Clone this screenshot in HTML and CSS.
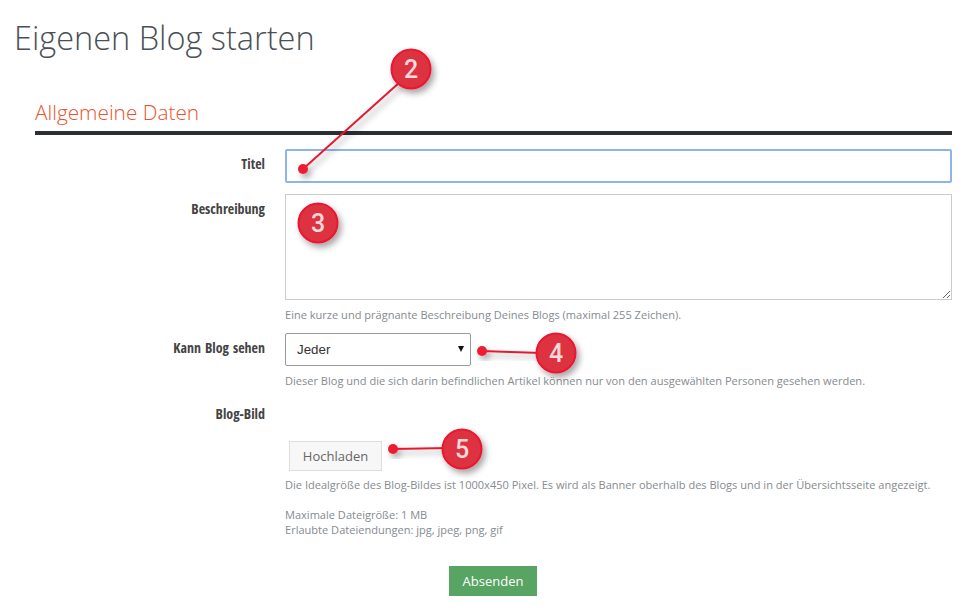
FILE: index.html
```html
<!DOCTYPE html>
<html lang="de">
<head>
    <meta charset="UTF-8">
    <meta name="viewport" content="width=device-width, initial-scale=1.0">
    <title>Eigenen Blog starten</title>
    <link rel="stylesheet" href="styles.css">
</head>
<body>
    <h1 class="page-title">Eigenen Blog starten</h1>

    <form class="blog-form">
        <h2 class="section-title">Allgemeine Daten</h2>

        <div class="form-row row-title">
            <label class="form-label">Titel</label>
            <div class="form-field">
                <input type="text" class="text-input">
            </div>
        </div>

        <div class="form-row row-description">
            <label class="form-label">Beschreibung</label>
            <div class="form-field">
                <textarea class="text-area"></textarea>
                <p class="help-text">Eine kurze und prägnante Beschreibung Deines Blogs (maximal 255 Zeichen).</p>
            </div>
        </div>

        <div class="form-row row-visibility">
            <label class="form-label">Kann Blog sehen</label>
            <div class="form-field">
                <div class="select-wrap">
                    <select class="select-input">
                        <option>Jeder</option>
                    </select>
                </div>
                <p class="help-text">Dieser Blog und die sich darin befindlichen Artikel können nur von den ausgewählten Personen gesehen werden.</p>
            </div>
        </div>

        <div class="form-row row-image">
            <label class="form-label">Blog-Bild</label>
            <div class="form-field">
                <button type="button" class="upload-btn">Hochladen</button>
                <p class="help-text">Die Idealgröße des Blog-Bildes ist 1000x450 Pixel. Es wird als Banner oberhalb des Blogs und in der Übersichtsseite angezeigt.</p>
                <p class="help-text help-limits">Maximale Dateigröße: 1 MB<br>Erlaubte Dateiendungen: jpg, jpeg, png, gif</p>
            </div>
        </div>

        <div class="form-actions">
            <button type="button" class="submit-btn">Absenden</button>
        </div>
    </form>

    <!-- numbered callouts lying over the form -->
    <svg class="callouts" width="971" height="608" viewBox="0 0 971 608">
        <defs>
            <filter id="soft-shadow" x="-50%" y="-50%" width="200%" height="200%">
                <feDropShadow dx="3" dy="4" stdDeviation="3" flood-color="#000" flood-opacity="0.35"/>
            </filter>
        </defs>
        <g filter="url(#soft-shadow)">
            <line class="callout-line" x1="303" y1="169" x2="400" y2="82"/>
            <circle class="callout-dot" cx="303" cy="169" r="5"/>
        </g>
        <g filter="url(#soft-shadow)">
            <line class="callout-line" x1="482" y1="351" x2="542" y2="353"/>
            <circle class="callout-dot" cx="482" cy="351" r="5"/>
        </g>
        <g filter="url(#soft-shadow)">
            <line class="callout-line" x1="393" y1="449" x2="448" y2="448"/>
            <circle class="callout-dot" cx="393" cy="449" r="5"/>
        </g>
        <g filter="url(#soft-shadow)"><circle class="callout-badge" cx="411" cy="69" r="19.5"/></g>
        <text class="callout-num" x="411" y="78">2</text>
        <g filter="url(#soft-shadow)"><circle class="callout-badge" cx="318" cy="223" r="19.5"/></g>
        <text class="callout-num" x="318" y="232">3</text>
        <g filter="url(#soft-shadow)"><circle class="callout-badge" cx="556" cy="353" r="19.5"/></g>
        <text class="callout-num" x="556" y="362">4</text>
        <g filter="url(#soft-shadow)"><circle class="callout-badge" cx="462" cy="449" r="19.5"/></g>
        <text class="callout-num" x="462" y="458">5</text>
    </svg>
</body>
</html>
```
FILE: styles.css
```css
body {
    margin: 0;
    height: 608px;
    overflow: hidden;
    background: #fff;
    font-family: "Open Sans", sans-serif;
    color: #555;
    position: relative;
}

.page-title {
    margin: 0;
    padding: 15px 0 0 14px;
    font-size: 32.5px;
    line-height: 46px;
    font-weight: 300;
    color: #4a5056;
}

.blog-form {
    margin: 0 19px 0 35px;
    padding-top: 37px;
}

.section-title {
    margin: 0;
    padding-bottom: 5px;
    border-bottom: 4px solid #2b2e33;
    font-size: 20.8px;
    line-height: 28px;
    font-weight: 300;
    color: #e9522c;
}

.form-row {
    display: grid;
    grid-template-columns: 230px 1fr;
    column-gap: 20px;
}

.row-title {
    margin-top: 14px;
}

.row-description {
    margin-top: 11px;
}

.row-visibility {
    margin-top: 11px;
}

.row-image {
    margin-top: 16px;
}

.form-label {
    text-align: right;
    font-size: 14px;
    line-height: 20px;
    font-weight: 700;
    font-stretch: 75%;
    word-spacing: 1.5px;
    color: #444;
}

.row-title .form-label {
    padding-top: 5px;
}

.row-description .form-label {
    padding-top: 5px;
}

.row-visibility .form-label {
    padding-top: 5px;
}

.text-input {
    display: block;
    box-sizing: border-box;
    width: 100%;
    height: 34px;
    border: 2px solid #8fb4ec;
    border-radius: 2px;
    outline: none;
}

.text-area {
    display: block;
    box-sizing: border-box;
    width: 100%;
    height: 106px;
    border: 1px solid #ccc;
    border-radius: 0;
    outline: none;
}

.select-wrap {
    position: relative;
    width: 186px;
}

.select-wrap::after {
    content: "";
    position: absolute;
    left: 173px;
    top: 13px;
    border-left: 3px solid transparent;
    border-right: 3px solid transparent;
    border-top: 6px solid #111;
}

.select-input {
    display: block;
    box-sizing: border-box;
    width: 186px;
    height: 33px;
    padding-left: 11px;
    border: 1px solid #999;
    border-radius: 2px;
    background: #fff;
    appearance: none;
    font-family: "Liberation Sans", sans-serif;
    font-size: 13.33px;
    color: #333;
}

.help-text {
    margin: 0;
    font-size: 11.05px;
    line-height: 15px;
    color: #868b90;
}

.row-description .help-text {
    margin-top: 7px;
}

.row-visibility .help-text {
    margin-top: 7px;
}

.row-image .help-text {
    margin-top: 6px;
}

.row-image .help-limits {
    margin-top: 15px;
}

.upload-btn {
    display: block;
    box-sizing: border-box;
    width: 93px;
    height: 30px;
    margin: 37px 0 0 4px;
    border: 1px solid #ddd;
    border-radius: 0;
    background: #f7f7f7;
    font-family: "Open Sans", sans-serif;
    font-size: 13px;
    color: #666;
}

.form-actions {
    display: flex;
    justify-content: center;
    margin-top: 29px;
    padding-right: 1px;
}

.submit-btn {
    width: 88px;
    height: 30px;
    padding: 0;
    border: none;
    border-radius: 0;
    background: #57a463;
    font-family: "Open Sans", sans-serif;
    font-size: 13px;
    color: #fff;
}

.callouts {
    position: absolute;
    left: 0;
    top: 0;
}

.callout-line {
    stroke: #e8192f;
    stroke-width: 2;
}

.callout-dot {
    fill: #ed1c33;
}

.callout-badge {
    fill: #dd3340;
    stroke: #ea1530;
    stroke-width: 2;
}

.callout-num {
    fill: #f7d9dc;
    font-family: Roboto, sans-serif;
    font-size: 25px;
    font-weight: 500;
    text-anchor: middle;
}
```
